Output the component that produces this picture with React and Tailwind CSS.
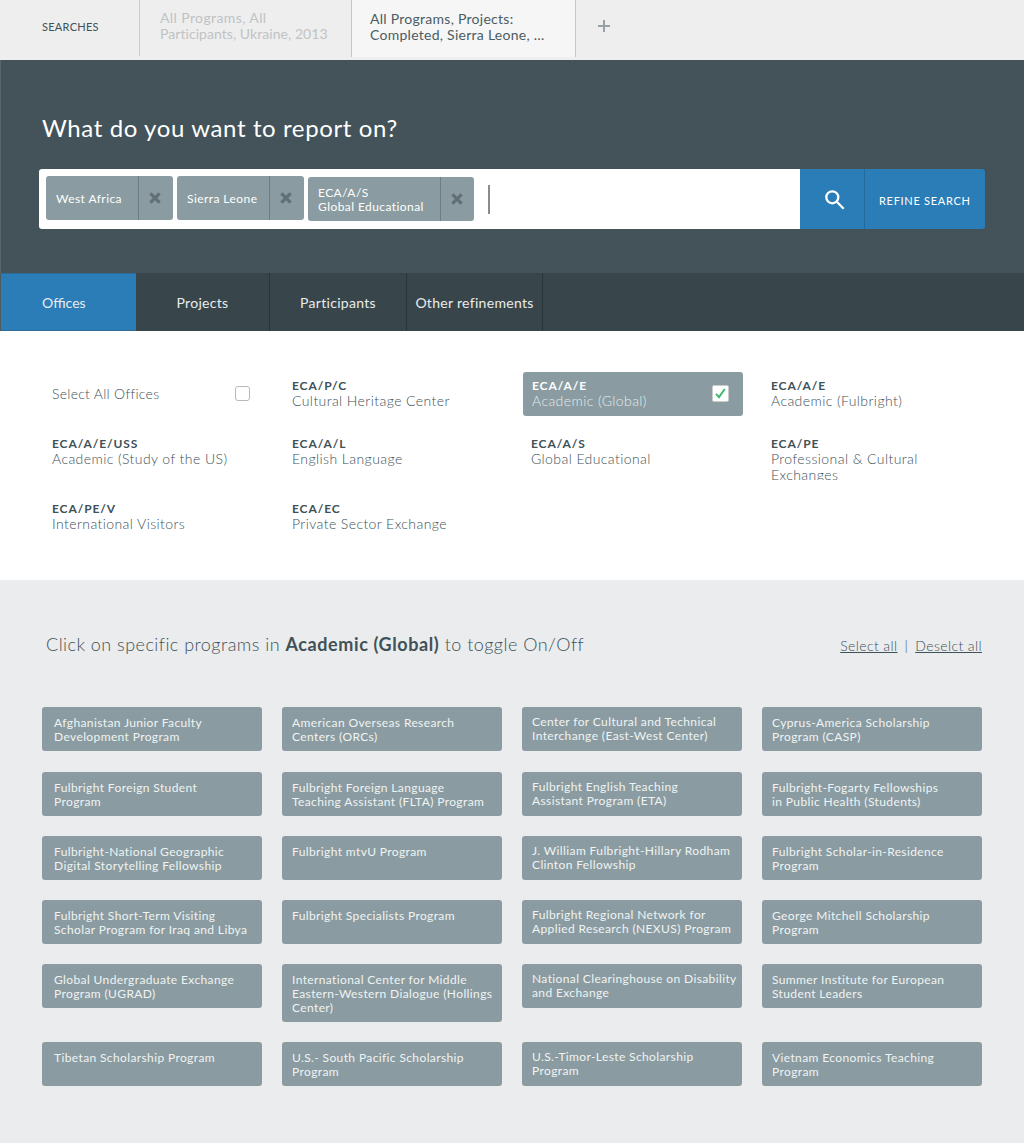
import React from "react";

const offices = [
  { lines: ["Select All Offices"], all: true },
  { code: "ECA/P/C", lines: ["Cultural Heritage Center"] },
  { code: "ECA/A/E", lines: ["Academic (Global)"], selected: true },
  { code: "ECA/A/E", lines: ["Academic (Fulbright)"] },
  { code: "ECA/A/E/USS", lines: ["Academic (Study of the US)"] },
  { code: "ECA/A/L", lines: ["English Language"] },
  { code: "ECA/A/S", lines: ["Global Educational"] },
  { code: "ECA/PE", lines: ["Professional & Cultural", "Exchanges"] },
  { code: "ECA/PE/V", lines: ["International Visitors"] },
  { code: "ECA/EC", lines: ["Private Sector Exchange"] },
];

const programs = [
  ["Afghanistan Junior Faculty", "Development Program"],
  ["American Overseas Research", "Centers (ORCs)"],
  ["Center for Cultural and Technical", "Interchange (East-West Center)"],
  ["Cyprus-America Scholarship", "Program (CASP)"],
  ["Fulbright Foreign Student", "Program"],
  ["Fulbright Foreign Language", "Teaching Assistant (FLTA) Program"],
  ["Fulbright English Teaching", "Assistant Program (ETA)"],
  ["Fulbright-Fogarty Fellowships", "in Public Health (Students)"],
  ["Fulbright-National Geographic", "Digital Storytelling Fellowship"],
  ["Fulbright mtvU Program"],
  ["J. William Fulbright-Hillary Rodham", "Clinton Fellowship"],
  ["Fulbright Scholar-in-Residence", "Program"],
  ["Fulbright Short-Term Visiting", "Scholar Program for Iraq and Libya"],
  ["Fulbright Specialists Program"],
  ["Fulbright Regional Network for", "Applied Research (NEXUS) Program"],
  ["George Mitchell Scholarship", "Program"],
  ["Global Undergraduate Exchange", "Program (UGRAD)"],
  ["International Center for Middle", "Eastern-Western Dialogue (Hollings", "Center)"],
  ["National Clearinghouse on Disability", "and Exchange"],
  ["Summer Institute for European", "Student Leaders"],
  ["Tibetan Scholarship Program"],
  ["U.S.- South Pacific Scholarship", "Program"],
  ["U.S.-Timor-Leste Scholarship", "Program"],
  ["Vietnam Economics Teaching", "Program"],
];

function Lines({ lines }) {
  return lines.map((line) => (
    <span key={line} className="block whitespace-nowrap">{line}</span>
  ));
}

function Chip({ lines, className, closeClass }) {
  return (
    <div className={`flex h-[44px] rounded-[3px] bg-[#8a9ca1] text-white ${className}`}>
      <div className="flex flex-1 flex-col justify-center pl-[10px] pt-[2px] text-[12px] leading-[14px] tracking-[0.43px]">
        <Lines lines={lines} />
      </div>
      <button className={`flex items-center justify-center border-l border-[#6b7e84] pr-[2px] ${closeClass}`}>
        <svg width="12" height="12" viewBox="0 0 12 12" fill="none" stroke="#626f76" strokeWidth="3.2">
          <path d="M1.4 1.4 10.6 10.6M10.6 1.4 1.4 10.6" />
        </svg>
      </button>
    </div>
  );
}

function Office({ office, inset }) {
  const { code, lines, all, selected } = office;
  if (all) {
    return (
      <div className="flex h-[44px] items-center justify-between pb-px pl-[10px] pr-[12px] text-[14px] font-light tracking-[0.28px] text-[#405157]">
        <span>{lines[0]}</span>
        <span className="h-[15px] w-[15px] rounded-[3px] border border-[#b9b9b9] bg-white" />
      </div>
    );
  }
  return (
    <div
      className={
        selected
          ? "ml-px flex h-[44px] w-[220px] items-start justify-between rounded-[3px] bg-[#8a9ca1] pl-[9px] pr-[14px] text-[#e6eaeb]"
          : `flex max-h-[50px] min-h-[44px] items-start overflow-hidden text-[#405157] ${inset}`
      }
    >
      <div className="pt-[6px]">
        <div className={`text-[12px] font-bold leading-[15px] tracking-[0.9px] ${selected ? "text-white" : "text-[#405157]"}`}>{code}</div>
        <div className="text-[14px] font-light leading-[16px] tracking-[0.42px]">
          <Lines lines={lines} />
        </div>
      </div>
      {selected && (
        <span className="mt-[13px] flex h-[17px] w-[17px] items-center justify-center rounded-[2px] border border-[#c9cccd] bg-white">
          <svg width="11" height="11" viewBox="0 0 11 11" fill="none" stroke="#43b870" strokeWidth="2">
            <path d="M1 5.8 4 9.2 9.8 1" />
          </svg>
        </span>
      )}
    </div>
  );
}

export default function App() {
  return (
    <div className="h-[1143px] w-[1024px] overflow-hidden bg-white font-['Lato',sans-serif] text-[#405157]">
      <header className="flex h-[60px] bg-[#eeeeee]">
        <div className="h-[56px] w-[140px] border-r border-[#cbcecf] pl-[42px] pt-[19px] text-[11px] leading-[16px] tracking-[0.27px]">SEARCHES</div>
        <div className="h-[56px] w-[211px] pl-[20px] pt-[10px] text-[14px] leading-[16px] text-[#bfc3c4]">
          <span className="block whitespace-nowrap tracking-[0.4px]">All Programs, All</span>
          <span className="block whitespace-nowrap tracking-[0.06px]">Participants, Ukraine, 2013</span>
        </div>
        <div className="h-[57px] w-[225px] border-x border-[#c6c8c9] bg-[#f6f6f6] pl-[18px] pt-[11px] text-[14px] leading-[16px] tracking-[0.27px] text-[#4b5c62]">
          <Lines lines={["All Programs, Projects:", "Completed, Sierra Leone, …"]} />
        </div>
        <button className="ml-[22px] mt-[20px] h-[12px] w-[12px]">
          <svg width="12" height="12" viewBox="0 0 12 12" stroke="#97a1a4" strokeWidth="2">
            <path d="M6 0V12M0 6H12" />
          </svg>
        </button>
      </header>

      <section className="h-[213px] border-l border-[#53666d] bg-[#435359] pl-[38px] pt-[52px]">
        <h1 className="ml-[3px] h-[57px] whitespace-nowrap text-[24px] leading-[32px] tracking-[0.61px] text-white">What do you want to report on?</h1>
        <div className="flex h-[60px] w-[946px]">
          <div className="flex flex-1 items-start rounded-l-[3px] bg-white pl-[7px] pt-[7px]">
            <Chip lines={["West Africa"]} className="w-[127px]" closeClass="w-[35px]" />
            <Chip lines={["Sierra Leone"]} className="ml-[4px] w-[127px]" closeClass="w-[35px]" />
            <Chip lines={["ECA/A/S", "Global Educational"]} className="ml-[4px] mt-px w-[166px]" closeClass="w-[34px]" />
            <span className="ml-[14px] mt-[9px] h-[29px] w-[2px] bg-[#8b8b8b]" />
          </div>
          <button className="flex w-[64px] items-center justify-center bg-[#2a7db7] pl-[5px] pt-px">
            <svg width="20" height="20" viewBox="0 0 20 20" fill="none" stroke="white" strokeWidth="2.3">
              <circle cx="7.3" cy="7.3" r="6" />
              <path d="M11.8 11.8 18.7 18.7" />
            </svg>
          </button>
          <button className="w-[121px] whitespace-nowrap rounded-r-[3px] border-l border-[#216a9e] bg-[#2a7db7] pl-[14px] pt-[5px] text-left text-[11px] tracking-[0.7px] text-white">REFINE SEARCH</button>
        </div>
      </section>

      <nav className="flex h-[58px] border-l border-[#4b5c62] bg-[#38464b] text-[14px] leading-[58px] tracking-[0.3px] text-[#e9eced]">
        <button className="w-[135px] border-y border-[#2f6d98] bg-[#2a7db7] pl-[41px] pt-px text-left leading-[56px] tracking-normal">Offices</button>
        <button className="w-[134px] border-r border-[#27363b] pt-px">Projects</button>
        <button className="w-[137px] border-r border-[#27363b] pt-px">Participants</button>
        <button className="w-[136px] whitespace-nowrap border-r border-[#27363b] pt-px">Other refinements</button>
      </nav>

      <section className="grid h-[249px] grid-cols-[repeat(4,220px)] content-start gap-x-[20px] pl-[42px] pt-[41px]">
        {offices.map((office, i) => (
          <div key={i} className={i < 4 ? "h-[58px]" : i < 8 ? "h-[65px]" : "h-[44px]"}>
            <Office office={office} inset={i % 4 > 1 ? "pl-[9px]" : "pl-[10px]"} />
          </div>
        ))}
      </section>

      <section className="h-[563px] bg-[#ebecee] pl-[42px] pt-[50px]">
        <div className="flex h-[77px] w-[940px] justify-between">
          <h2 className="whitespace-nowrap pl-[4px] text-[18px] font-light leading-[29px] tracking-[0.46px]">
            Click on specific programs in <strong className="font-bold tracking-[0.6px]">Academic (Global)</strong> to toggle On/Off
          </h2>
          <div className="flex text-[14px] font-light leading-[32px] tracking-[0.4px] text-[#405157]">
            <a className="underline">Select all</a>
            <span className="px-[7px]">|</span>
            <a className="underline">Deselct all</a>
          </div>
        </div>
        <div className="grid grid-cols-[repeat(4,220px)] items-start gap-[20px]">
          {programs.map((lines, i) => (
            <button
              key={i}
              className={`flex flex-col items-start justify-start rounded-[3px] bg-[#8a9ca1] text-left text-[12px] leading-[14px] tracking-[0.38px] text-[#f0f3f3] ${
                i % 4 === 0 ? "pl-[12px]" : "pl-[10px]"
              } ${i % 4 === 2 ? "pt-[8px]" : "pt-[9px]"} ${i < 4 ? "mb-px" : ""} ${
                lines.length === 3 ? "h-[58px]" : "h-[44px]"
              }`}
            >
              <Lines lines={lines} />
            </button>
          ))}
        </div>
      </section>
    </div>
  );
}
